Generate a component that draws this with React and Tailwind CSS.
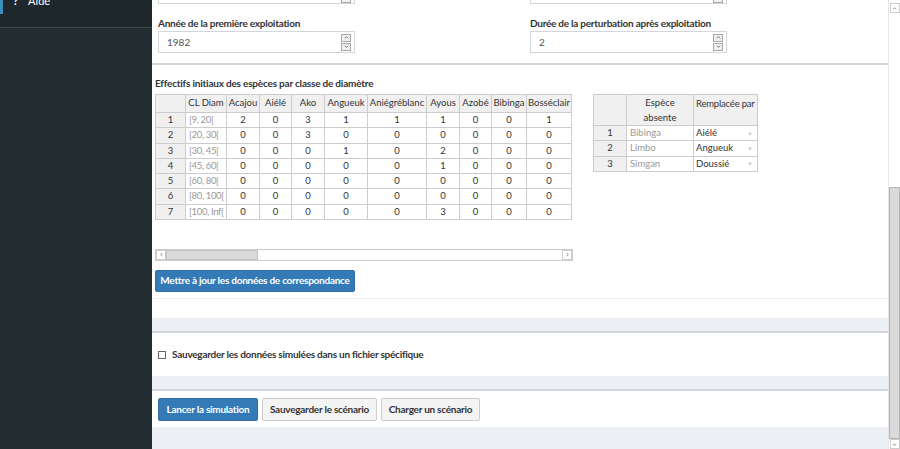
import React from 'react';

const leftCols = [30, 41, 33, 32, 33, 43, 59, 33, 32, 35, 45];
const leftHead = ['', 'CL Diam', 'Acajou', 'Aiélé', 'Ako', 'Angueuk', 'Aniégréblanc', 'Ayous', 'Azobé', 'Bibinga', 'Bosséclair'];
const leftRows = [
  ['[9, 20[', 2, 0, 3, 1, 1, 1, 0, 0, 1],
  ['[20, 30[', 0, 0, 3, 0, 0, 0, 0, 0, 0],
  ['[30, 45[', 0, 0, 0, 1, 0, 2, 0, 0, 0],
  ['[45, 60[', 0, 0, 0, 0, 0, 1, 0, 0, 0],
  ['[60, 80[', 0, 0, 0, 0, 0, 0, 0, 0, 0],
  ['[80, 100[', 0, 0, 0, 0, 0, 0, 0, 0, 0],
  ['[100, Inf[', 0, 0, 0, 0, 0, 3, 0, 0, 0],
];
const replacements = [
  ['Bibinga', 'Aiélé'],
  ['Limbo', 'Angueuk'],
  ['Simgan', 'Doussié'],
];

const Chevron = ({ up, className = '' }) => (
  <svg viewBox="0 0 8 5" className={className} fill="none" stroke="currentColor" strokeWidth="1.2">
    {up ? <path d="M1 4 L4 1 L7 4" /> : <path d="M1 1 L4 4 L7 1" />}
  </svg>
);

const Spinner = () => (
  <div className="flex flex-col gap-px">
    <div className="w-[10px] h-[8px] border border-[#a8a8a8] bg-[#f0f0f0] flex items-center justify-center text-[#555]">
      <Chevron up className="w-[5px] h-[3px]" />
    </div>
    <div className="w-[10px] h-[8px] border border-[#a8a8a8] bg-[#f0f0f0] flex items-center justify-center text-[#555]">
      <Chevron className="w-[5px] h-[3px]" />
    </div>
  </div>
);

const NumberInput = ({ value }) => (
  <div className="w-[197px] h-[22px] border border-[#d2d6de] bg-white flex items-center justify-between pl-[8px] pr-[3px]">
    <span className="text-[10px] text-[#555]">{value}</span>
    <Spinner />
  </div>
);

const Field = ({ label, value }) => (
  <div>
    <div className="text-[10px] font-bold tracking-[-0.25px] text-[#333] leading-[12px] mb-[2px]">{label}</div>
    <NumberInput value={value} />
  </div>
);

const ScrollArrow = ({ dir }) => (
  <div className="w-[10px] h-[10px] border border-[#ccc] bg-white flex items-center justify-center text-[#777]">
    <svg viewBox="0 0 6 6" className="w-[5px] h-[5px]" fill="none" stroke="currentColor" strokeWidth="1">
      {dir === 'up' && <path d="M1 4 L3 2 L5 4" />}
      {dir === 'down' && <path d="M1 2 L3 4 L5 2" />}
      {dir === 'left' && <path d="M4 1 L2 3 L4 5" />}
      {dir === 'right' && <path d="M2 1 L4 3 L2 5" />}
    </svg>
  </div>
);

export default function App() {
  return (
    <div
      className="flex w-[900px] h-[449px] overflow-hidden bg-[#ecf0f5] text-[#333]"
      style={{ fontFamily: 'Lato, "Liberation Sans", sans-serif' }}
    >
      {/* sidebar */}
      <aside className="w-[152px] shrink-0 bg-[#222d32] flex flex-col">
        <div className="h-[28px] bg-[#1e282c] border-b border-[#3a4850]">
          <div className="h-[14px] border-l-[3px] border-[#3c8dbc] overflow-hidden">
            <div className="flex items-center gap-[10px] pl-[10px] -mt-[6px] text-white text-[11px] leading-[14px]">
              <span className="font-bold">?</span>
              <span>Aide</span>
            </div>
          </div>
        </div>
      </aside>

      {/* content */}
      <main className="flex-1 min-w-0 flex flex-col">
        {/* parameters box */}
        <section className="bg-white h-[63px] shrink-0">
          <div className="grid grid-cols-[372px_1fr] pl-[6px]">
            <div className="w-[197px] h-[4px] border-x border-b border-[#d2d6de] flex justify-end pr-[3px]">
              <div className="w-[10px] h-[3px] border-x border-b border-[#a8a8a8] bg-[#f0f0f0]" />
            </div>
            <div className="w-[197px] h-[4px] border-x border-b border-[#d2d6de] flex justify-end pr-[3px]">
              <div className="w-[10px] h-[3px] border-x border-b border-[#a8a8a8] bg-[#f0f0f0]" />
            </div>
          </div>
          <div className="grid grid-cols-[372px_1fr] pl-[6px] pt-[13px]">
            <Field label="Année de la première exploitation" value="1982" />
            <Field label="Durée de la perturbation après exploitation" value="2" />
          </div>
        </section>

        {/* tables box */}
        <section className="bg-white border-t-2 border-[#d2d6de] h-[255px] shrink-0 flex flex-col">
          <div className="px-[3px] pt-[12px] flex-1">
            <div className="text-[10px] font-bold tracking-[-0.2px] leading-[12px] mb-[5px]">
              Effectifs initiaux des espèces par classe de diamètre
            </div>
            <div className="flex gap-[20px] items-start">
              <div>
                <table className="table-fixed border-collapse text-[9.5px]" style={{ width: 417 }}>
                  <colgroup>
                    {leftCols.map((w, i) => <col key={i} style={{ width: w }} />)}
                  </colgroup>
                  <thead>
                    <tr className="h-[18px]">
                      {leftHead.map((h, i) => (
                        <th key={i} className="border border-[#ccc] bg-[#f0f0f0] font-normal text-center whitespace-nowrap overflow-hidden p-0">
                          {h}
                        </th>
                      ))}
                    </tr>
                  </thead>
                  <tbody>
                    {leftRows.map((r, ri) => (
                      <tr key={ri} className="h-[15px]">
                        <td className="border border-[#ccc] bg-[#f0f0f0] text-center p-0">{ri + 1}</td>
                        <td className="border border-[#ccc] text-[#999] pl-[3px] tracking-[-0.35px] whitespace-nowrap overflow-hidden p-0">{r[0]}</td>
                        {r.slice(1).map((v, ci) => (
                          <td key={ci} className="border border-[#ccc] text-center p-0">{v}</td>
                        ))}
                      </tr>
                    ))}
                  </tbody>
                </table>
                {/* horizontal scroll bar */}
                <div className="mt-[29px] w-[418px] h-[12px] border border-[#ccc] bg-white flex items-center justify-between">
                  <div className="flex items-center">
                    <ScrollArrow dir="left" />
                    <div className="w-[92px] h-[10px] bg-[#dadada] border border-[#c4c4c4]" />
                  </div>
                  <ScrollArrow dir="right" />
                </div>
              </div>

              <table className="table-fixed border-collapse text-[9.5px]" style={{ width: 164 }}>
                <colgroup>
                  <col style={{ width: 33 }} />
                  <col style={{ width: 67 }} />
                  <col style={{ width: 64 }} />
                </colgroup>
                <thead>
                  <tr className="h-[31px]">
                    <th className="border border-[#ccc] bg-[#f0f0f0] p-0" />
                    <th className="border border-[#ccc] bg-[#f0f0f0] font-normal text-center leading-[15px] p-0">Espèce<br />absente</th>
                    <th className="border border-[#ccc] bg-[#f0f0f0] font-normal text-left align-top leading-[15px] pl-[2px] pt-[1px] tracking-[-0.2px] whitespace-nowrap overflow-hidden">Remplacée par</th>
                  </tr>
                </thead>
                <tbody>
                  {replacements.map(([a, b], i) => (
                    <tr key={i} className="h-[15px]">
                      <td className="border border-[#ccc] bg-[#f0f0f0] text-center p-0">{i + 1}</td>
                      <td className="border border-[#ccc] text-[#999] pl-[3px] p-0">{a}</td>
                      <td className="border border-[#ccc] pl-[2px] pr-[4px] p-0">
                        <div className="flex items-center justify-between">
                          <span>{b}</span>
                          <span className="text-[6px] text-[#ccc]">▼</span>
                        </div>
                      </td>
                    </tr>
                  ))}
                </tbody>
              </table>
            </div>

            <button className="mt-[9px] w-[200px] h-[22px] bg-[#337ab7] border border-[#2e6da4] rounded-[2px] text-white text-[10px] font-bold tracking-[-0.25px] whitespace-nowrap">
              Mettre à jour les données de correspondance
            </button>
          </div>
          <div className="h-[20px] border-t border-[#f0f0f0]" />
        </section>

        {/* options box */}
        <div className="h-[13px] shrink-0" />
        <section className="bg-white border-t-2 border-[#d2d6de] h-[45px] shrink-0 flex items-center pl-[6px]">
          <label className="flex items-center gap-[6px] text-[10px] font-bold tracking-[-0.25px]">
            <span className="w-[8px] h-[8px] border border-[#666] bg-white" />
            Sauvegarder les données simulées dans un fichier spécifique
          </label>
        </section>

        {/* actions box */}
        <div className="h-[13px] shrink-0" />
        <section className="bg-white border-t-2 border-[#d2d6de] h-[38px] shrink-0 flex items-center gap-[4px] pl-[6px]">
          <button className="w-[100px] h-[23px] bg-[#337ab7] border border-[#2e6da4] rounded-[2px] text-white text-[10px] font-bold tracking-[-0.25px]">
            Lancer la simulation
          </button>
          <button className="w-[115px] h-[23px] bg-[#f4f4f4] border border-[#ccc] rounded-[2px] text-[#333] text-[10px] font-bold tracking-[-0.25px]">
            Sauvegarder le scénario
          </button>
          <button className="w-[99px] h-[23px] bg-[#f4f4f4] border border-[#ccc] rounded-[2px] text-[#333] text-[10px] font-bold tracking-[-0.25px]">
            Charger un scénario
          </button>
        </section>
      </main>

      {/* page scroll bar */}
      <div className="w-[12px] shrink-0 bg-white border-l border-[#e6e6e6] flex flex-col items-center justify-between pt-[3px]">
        <ScrollArrow dir="up" />
        <div className="flex flex-col items-center">
          <div className="w-[11px] h-[252px] bg-[#dadada] border border-[#b4b4b4]" />
          <ScrollArrow dir="down" />
        </div>
      </div>
    </div>
  );
}
